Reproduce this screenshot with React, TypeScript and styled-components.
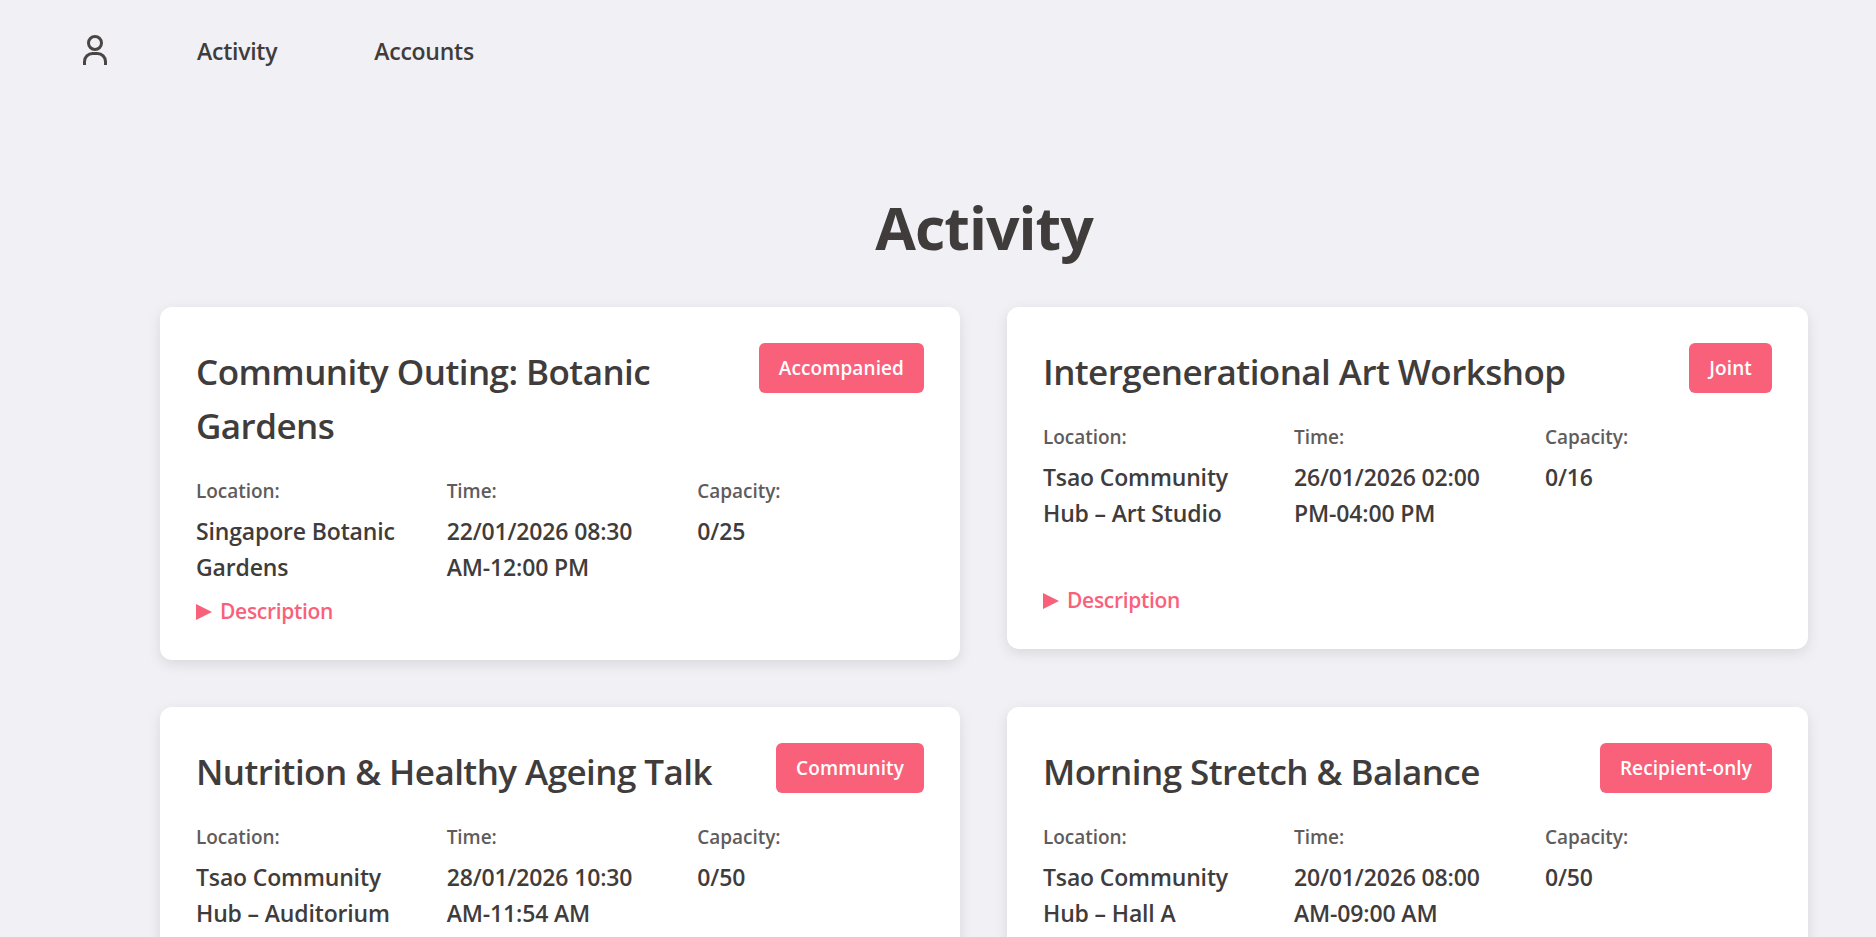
import React from "react";
import styled, { createGlobalStyle } from "styled-components";

const Global = createGlobalStyle`
  html, body { margin: 0; padding: 0; background: #f0f0f5; }
  body { font-family: "Open Sans", "Noto Sans", sans-serif; color: #403c3c; }
  * { box-sizing: border-box; }
`;

const Page = styled.div`
  height: 100vh;
  overflow: hidden;
  background: #f0f0f5;
`;

const Nav = styled.nav`
  display: flex;
  align-items: center;
  height: 102px;
  padding-left: 83px;
`;

const UserIcon = styled.svg`
  width: 24px;
  height: 30px;
  margin-right: 90px;
  margin-top: -2px;
  color: #4a4646;
`;

const NavLink = styled.a`
  font-size: 23px;
  font-weight: 600;
  letter-spacing: -0.25px;
  color: #403c3c;
  margin-right: 97px;
`;

const Heading = styled.h1`
  margin: 85px 0 40px;
  padding: 0 68px 0 160px;
  text-align: center;
  font-size: 59px;
  line-height: 80px;
  font-weight: 700;
  letter-spacing: -1px;
  color: #403c3c;
`;

const Grid = styled.div`
  display: grid;
  grid-template-columns: 800px 1fr;
  gap: 47px;
  align-items: start;
  padding: 0 68px 0 160px;
`;

const Card = styled.article`
  background: #fff;
  border-radius: 12px;
  padding: 36px 36px 35px;
  box-shadow: 0 4px 14px rgba(0, 0, 0, 0.1);
`;

const CardHeader = styled.header`
  display: flex;
  justify-content: space-between;
  align-items: flex-start;
  gap: 24px;
`;

const CardTitle = styled.h2`
  margin: 0;
  padding-top: 2px;
  font-size: 35px;
  line-height: 54px;
  font-weight: 600;
  letter-spacing: -0.55px;
  color: #403c3c;
`;

const Badge = styled.span`
  flex: none;
  height: 50px;
  display: flex;
  align-items: center;
  padding: 0 20px;
  border-radius: 6px;
  background: #f9617b;
  color: #fff;
  font-size: 19px;
  font-weight: 600;
  letter-spacing: 0.1px;
`;

const Meta = styled.div<{ $tall?: boolean }>`
  display: grid;
  grid-template-columns: repeat(3, 1fr);
  column-gap: 24px;
  margin-top: 25px;
  margin-bottom: ${(p) => (p.$tall ? "56px" : "13px")};
`;

const Label = styled.div`
  font-size: 19px;
  line-height: 27px;
  font-weight: 600;
  letter-spacing: -0.05px;
  color: #605c5c;
  margin-bottom: 8px;
`;

const Value = styled.div`
  font-size: 23px;
  line-height: 36px;
  font-weight: 600;
  letter-spacing: -0.15px;
  color: #403c3c;
`;

const Details = styled.details`
  font-size: 21px;
  line-height: 27px;
  font-weight: 600;
  letter-spacing: -0.3px;
  color: #f9617b;
`;

const Summary = styled.summary`
  display: flex;
  align-items: center;
  gap: 8px;
  list-style: none;
  cursor: pointer;

  &::-webkit-details-marker {
    display: none;
  }

  &::before {
    content: "";
    width: 0;
    height: 0;
    border-left: 16px solid #f9617b;
    border-top: 8.5px solid transparent;
    border-bottom: 8.5px solid transparent;
  }
`;

type Item = {
  title: string;
  badge: string;
  location: string;
  time: string;
  capacity: string;
  tall?: boolean;
};

const items: Item[] = [
  { title: "Community Outing: Botanic Gardens", badge: "Accompanied", location: "Singapore Botanic Gardens", time: "22/01/2026 08:30 AM-12:00 PM", capacity: "0/25" },
  { title: "Intergenerational Art Workshop", badge: "Joint", location: "Tsao Community Hub – Art Studio", time: "26/01/2026 02:00 PM-04:00 PM", capacity: "0/16", tall: true },
  { title: "Nutrition & Healthy Ageing Talk", badge: "Community", location: "Tsao Community Hub – Auditorium", time: "28/01/2026 10:30 AM-11:54 AM", capacity: "0/50", tall: true },
  { title: "Morning Stretch & Balance", badge: "Recipient-only", location: "Tsao Community Hub – Hall A", time: "20/01/2026 08:00 AM-09:00 AM", capacity: "0/50", tall: true },
];

export default function App() {
  return (
    <Page>
      <Global />
      <Nav>
        <UserIcon viewBox="0 0 24 30" fill="none" stroke="currentColor" strokeWidth="3">
          <circle cx="12" cy="8" r="6.5" />
          <path d="M1.5 30v-3.5a8 8 0 0 1 8-8h5a8 8 0 0 1 8 8V30" />
        </UserIcon>
        <NavLink>Activity</NavLink>
        <NavLink>Accounts</NavLink>
      </Nav>
      <Heading>Activity</Heading>
      <Grid>
        {items.map((it) => (
          <Card key={it.title}>
            <CardHeader>
              <CardTitle>{it.title}</CardTitle>
              <Badge>{it.badge}</Badge>
            </CardHeader>
            <Meta $tall={it.tall}>
              <div>
                <Label>Location:</Label>
                <Value>{it.location}</Value>
              </div>
              <div>
                <Label>Time:</Label>
                <Value>{it.time}</Value>
              </div>
              <div>
                <Label>Capacity:</Label>
                <Value>{it.capacity}</Value>
              </div>
            </Meta>
            <Details>
              <Summary>Description</Summary>
            </Details>
          </Card>
        ))}
      </Grid>
    </Page>
  );
}
